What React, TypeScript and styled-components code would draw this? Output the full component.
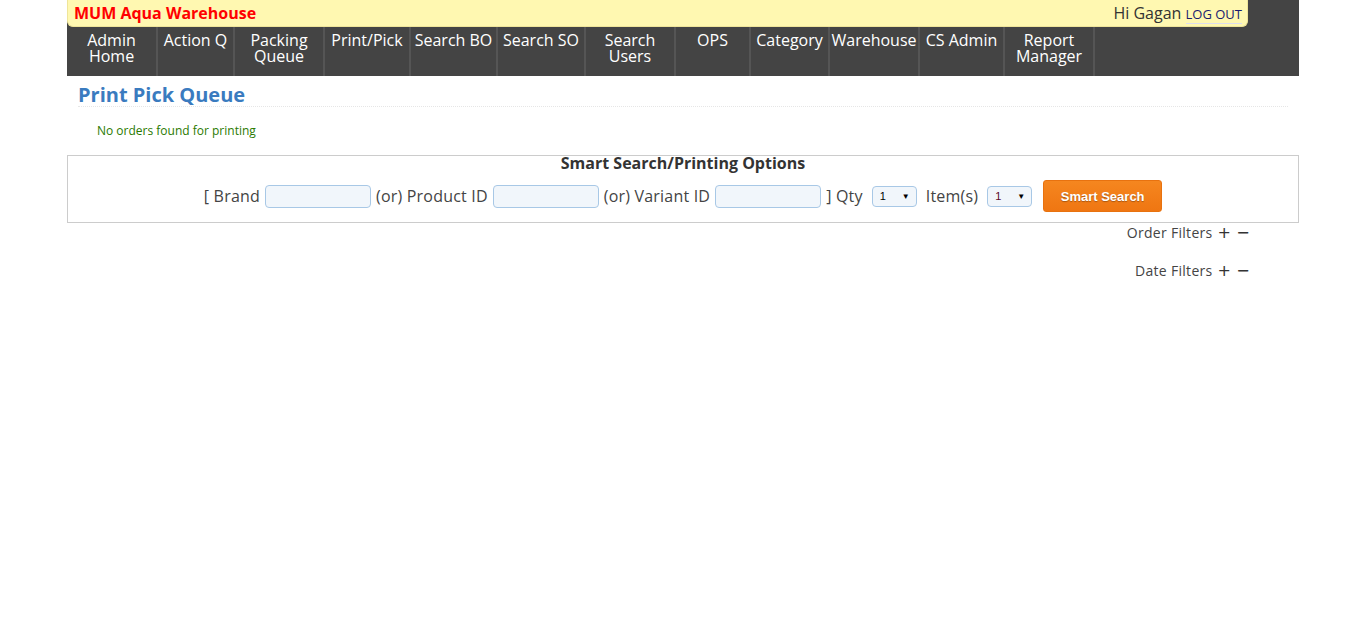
import React from 'react'
import styled, { createGlobalStyle } from 'styled-components'

const GlobalStyle = createGlobalStyle`
  body {
    margin: 0;
    background: #fff;
    font-family: "Open Sans", "Noto Sans", sans-serif;
    color: #333;
  }
`

const navItems = [
  { label: ['Admin', 'Home'], width: 91 },
  { label: ['Action Q'], width: 77 },
  { label: ['Packing', 'Queue'], width: 90 },
  { label: ['Print/Pick'], width: 86 },
  { label: ['Search BO'], width: 87 },
  { label: ['Search SO'], width: 88 },
  { label: ['Search', 'Users'], width: 90 },
  { label: ['OPS'], width: 75 },
  { label: ['Category'], width: 79 },
  { label: ['Warehouse'], width: 90 },
  { label: ['CS Admin'], width: 85 },
  { label: ['Report', 'Manager'], width: 90 },
]

const App = () => {
  return (
    <>
      <GlobalStyle />
      <Page>
        <Header>
          <TopBar>
            <Brand>MUM Aqua Warehouse</Brand>
            <User>
              Hi Gagan <Logout href="#">LOG OUT</Logout>
            </User>
          </TopBar>
          <Nav>
            {navItems.map((item) => (
              <NavItem key={item.label.join(' ')} $w={item.width}>
                {item.label.map((l) => (
                  <NavLine key={l}>{l}</NavLine>
                ))}
              </NavItem>
            ))}
          </Nav>
        </Header>

        <Title>Print Pick Queue</Title>
        <Notice>No orders found for printing</Notice>

        <SearchBox>
          <BoxTitle>Smart Search/Printing Options</BoxTitle>
          <SearchRow>
            <Label>[ Brand</Label>
            <TextInput />
            <Label>(or) Product ID</Label>
            <TextInput />
            <Label>(or) Variant ID</Label>
            <TextInput />
            <Label>] Qty</Label>
            <Select>
              <span>1</span>
              <Arrow>▼</Arrow>
            </Select>
            <Label>Item(s)</Label>
            <Select $dark>
              <span>1</span>
              <Arrow>▼</Arrow>
            </Select>
            <SearchButton>Smart Search</SearchButton>
          </SearchRow>
        </SearchBox>

        <Filters>
          <FilterLine>
            Order Filters<Toggle>+</Toggle><Toggle>−</Toggle>
          </FilterLine>
          <FilterLine>
            Date Filters<Toggle>+</Toggle><Toggle>−</Toggle>
          </FilterLine>
        </Filters>
      </Page>
    </>
  )
}

const Page = styled.div`
  width: 1232px;
  margin: 0 auto;
`
const Header = styled.div`
  background: #444;
`
const TopBar = styled.div`
  width: 1181px;
  height: 27px;
  box-sizing: border-box;
  background: #fff8b1;
  border: 1px solid #efe59a;
  border-top: 0;
  border-radius: 0 0 6px 6px;
  display: flex;
  align-items: center;
  justify-content: space-between;
  padding: 0 5px 0 6px;
`
const Brand = styled.div`
  color: #f00;
  font-weight: bold;
  font-size: 16px;
`
const User = styled.div`
  color: #333;
  font-size: 16px;
`
const Logout = styled.a`
  color: #1a1a6e;
  font-size: 13px;
  text-decoration: none;
  border-bottom: 1px solid #dde;
`
const Nav = styled.div`
  display: flex;
  height: 49px;
`
const NavItem = styled.div<{ $w: number }>`
  width: ${(p) => p.$w}px;
  box-sizing: border-box;
  border-right: 2px solid #555;
  display: flex;
  flex-direction: column;
  align-items: center;
  padding-top: 5px;
  color: #fff;
  font-size: 16px;
`
const NavLine = styled.span`
  display: block;
  height: 16px;
  line-height: 16px;
`
const Title = styled.h2`
  margin: 8px 11px 0;
  padding-bottom: 0;
  color: #3a7bbf;
  font-size: 20px;
  line-height: 22px;
  border-bottom: 1px dotted #e6e6e6;
`
const Notice = styled.p`
  margin: 15px 0 0 30px;
  font-size: 12px;
  color: #2a7a00;
`
const SearchBox = styled.div`
  margin-top: 16px;
  border: 1px solid #ccc;
  height: 68px;
  box-sizing: border-box;
`
const BoxTitle = styled.div`
  text-align: center;
  font-weight: bold;
  font-size: 16px;
  line-height: 16px;
  margin-top: -1px;
  color: #333;
`
const SearchRow = styled.div`
  display: flex;
  justify-content: center;
  align-items: center;
  gap: 5px;
  margin-top: 9px;
`
const Label = styled.span`
  font-size: 16px;
  letter-spacing: 0.2px;
  color: #444;
`
const TextInput = styled.input`
  width: 106px;
  height: 23px;
  box-sizing: border-box;
  background: #f1f6fb;
  border: 1px solid #a8c8e6;
  border-radius: 4px;
`
const Select = styled.div<{ $dark?: boolean }>`
  width: 45px;
  height: 21px;
  box-sizing: border-box;
  background: #f1f6fb;
  border: 1px solid #a8c8e6;
  border-radius: 4px;
  display: flex;
  align-items: center;
  justify-content: space-between;
  padding: 0 6px 0 7px;
  margin: 0 4px;
  font-family: Arial, "Liberation Sans", sans-serif;
  font-size: 11px;
  color: ${(p) => (p.$dark ? '#5a0a2a' : '#000')};
`
const Arrow = styled.span`
  font-size: 8px;
  color: #000;
`
const SearchButton = styled.button`
  margin-left: 2px;
  width: 119px;
  height: 32px;
  background: linear-gradient(#f5861f, #ef7612);
  border: 1px solid #e8720f;
  border-radius: 3px;
  color: #fff;
  font-family: Arial, "Liberation Sans", sans-serif;
  font-weight: bold;
  font-size: 13px;
  text-shadow: 0 1px 1px rgba(0, 0, 0, 0.3);
`
const Filters = styled.div`
  display: flex;
  flex-direction: column;
  align-items: flex-end;
  padding-right: 49px;
  gap: 18px;
`
const FilterLine = styled.div`
  font-size: 14px;
  line-height: 20px;
  letter-spacing: 0.3px;
  color: #444;
  display: flex;
  align-items: center;
`
const Toggle = styled.span`
  font-family: "DejaVu Sans", sans-serif;
  font-size: 16px;
  line-height: 20px;
  color: #333;
  margin-left: 5px;
`

export default App
